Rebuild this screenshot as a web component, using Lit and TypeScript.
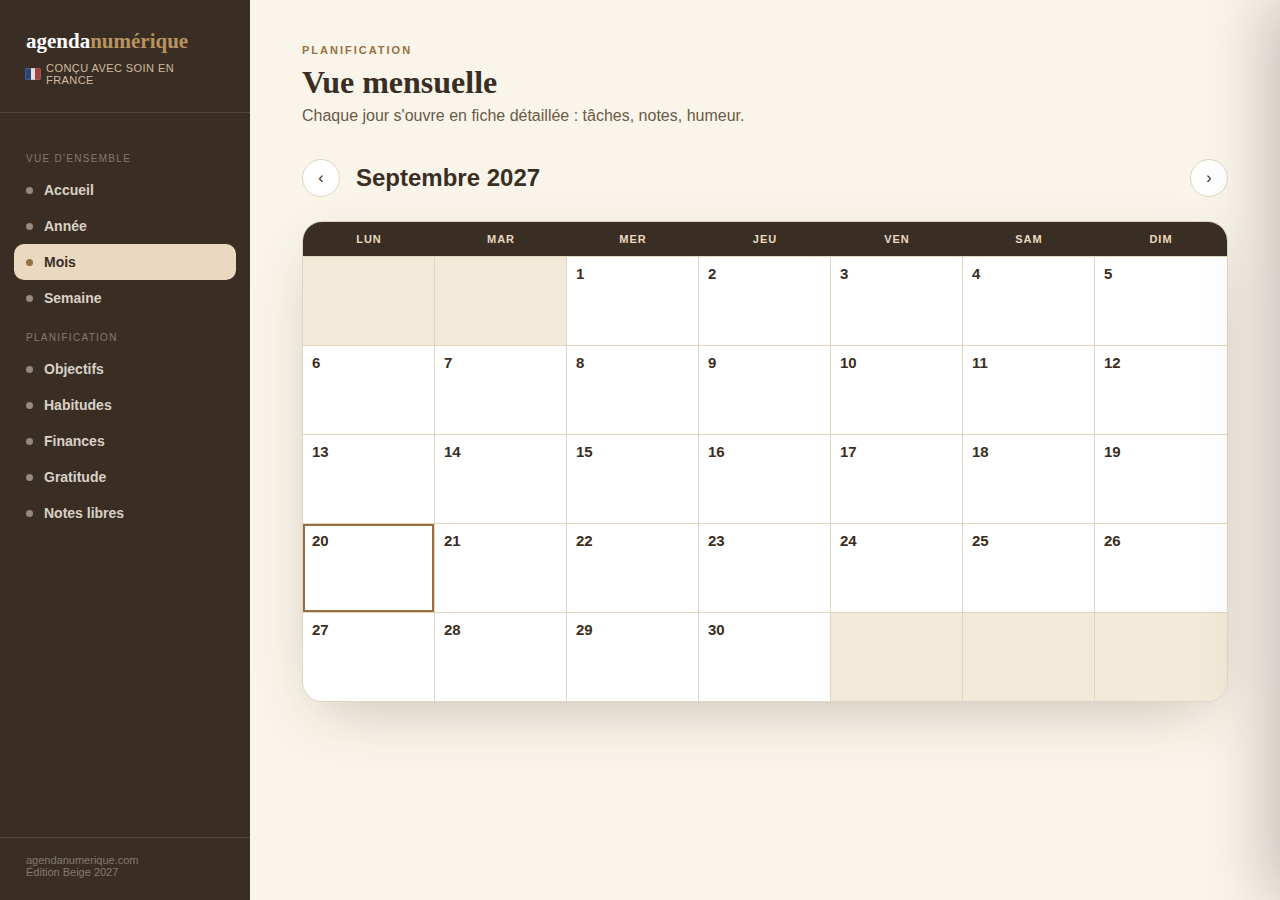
import { LitElement, html, css, svg } from "lit";
import { customElement, property } from "lit/decorators.js";
import { classMap } from "lit/directives/class-map.js";

interface NavSection {
  title: string;
  items: string[];
}

const SECTIONS: NavSection[] = [
  { title: "Vue d'ensemble", items: ["Accueil", "Année", "Mois", "Semaine"] },
  { title: "Planification", items: ["Objectifs", "Habitudes", "Finances", "Gratitude", "Notes libres"] },
];

const WEEKDAYS = ["Lun", "Mar", "Mer", "Jeu", "Ven", "Sam", "Dim"];

const FLAG = svg`
  <svg class="flag" viewBox="0 0 16 12" width="16" height="12" role="img" aria-label="Drapeau français">
    <defs><clipPath id="r"><rect x="0" y="0" width="16" height="12" rx="1.5"/></clipPath></defs>
    <g clip-path="url(#r)">
      <rect width="6" height="12" fill="#26457a"/>
      <rect x="6" width="4" height="12" fill="#e6e0de"/>
      <rect x="10" width="6" height="12" fill="#a2423f"/>
    </g>
    <rect x=".5" y=".5" width="15" height="11" rx="1.5" fill="none" stroke="#8b8794" stroke-opacity=".35"/>
  </svg>`;

@customElement("agenda-sidebar")
export class AgendaSidebar extends LitElement {
  @property() active = "Mois";

  static styles = css`
    :host {
      display: flex;
      flex-direction: column;
      box-sizing: border-box;
      background: #3a2e24;
      color: #fff;
    }
    .brand {
      padding: 28px 26px 26px;
      border-bottom: 1px solid #53473b;
    }
    .logo {
      font: bold 21px/27px "Liberation Serif", serif;
    }
    .logo span {
      color: #b8935f;
    }
    .made {
      display: flex;
      align-items: center;
      gap: 5px;
      margin: 7px 0 0 -1px;
      font-size: 11px;
      line-height: 12px;
      letter-spacing: 0.04em;
      text-transform: uppercase;
      color: #d0bba1;
    }
    .flag {
      flex: none;
    }
    nav {
      flex: 1;
      padding: 22px 14px;
    }
    h2 {
      margin: 0;
      padding: 18px 12px 7px;
      font-size: 10px;
      line-height: 12px;
      font-weight: 400;
      letter-spacing: 0.13em;
      text-transform: uppercase;
      color: #857a6e;
    }
    ul {
      margin: 0 0 -2px;
      padding: 0;
      list-style: none;
    }
    a {
      display: flex;
      align-items: center;
      gap: 11px;
      padding: 10px 12px;
      border-radius: 10px;
      font-size: 14px;
      line-height: 16px;
      font-weight: 700;
      color: #d8d1c8;
      text-decoration: none;
    }
    a::before {
      content: "";
      width: 7px;
      height: 7px;
      border-radius: 50%;
      background: #958a7e;
    }
    a.active {
      background: #ead9c0;
      color: #3a2e24;
    }
    a.active::before {
      background: #96703f;
    }
    footer {
      padding: 16px 26px 22px;
      border-top: 1px solid #53473b;
      font-size: 11px;
      line-height: 12px;
      color: #857a6e;
    }
  `;

  render() {
    return html`
      <div class="brand">
        <div class="logo">agenda<span>numérique</span></div>
        <div class="made">${FLAG}<span>Conçu avec soin en France</span></div>
      </div>
      <nav>
        ${SECTIONS.map(
          (s) => html`
            <h2>${s.title}</h2>
            <ul>
              ${s.items.map(
                (i) => html`<li><a href="#" class=${classMap({ active: i === this.active })}>${i}</a></li>`
              )}
            </ul>
          `
        )}
      </nav>
      <footer>agendanumerique.com<br />Édition Beige 2027</footer>
    `;
  }
}

@customElement("month-calendar")
export class MonthCalendar extends LitElement {
  @property({ type: Number }) offset = 2;
  @property({ type: Number }) days = 30;
  @property({ type: Number }) today = 20;

  static styles = css`
    :host {
      display: block;
      overflow: hidden;
      background: #fff;
      border: 1px solid #e2d5c0;
      border-radius: 20px;
      box-shadow: 0 20px 60px -20px rgba(58, 36, 30, 0.3);
    }
    table {
      width: 100%;
      table-layout: fixed;
      border-collapse: separate;
      border-spacing: 0;
    }
    th {
      padding: 11px 0;
      background: #3a2e24;
      color: #ead9c0;
      font-size: 11px;
      line-height: 12px;
      letter-spacing: 1px;
      text-transform: uppercase;
    }
    td {
      height: 88px;
      padding: 0;
      border-top: 1px solid #e2d5c0;
      border-right: 1px solid #e2d5c0;
    }
    td:last-child {
      border-right: 0;
    }
    td.empty {
      background: #f2e9d9;
    }
    button {
      display: flex;
      box-sizing: border-box;
      width: 100%;
      height: 88px;
      padding: 8px 9px;
      border: 0;
      background: none;
      color: #3a2e24;
      font: bold 15px/18px "Liberation Sans", Arial, sans-serif;
      text-align: left;
      cursor: pointer;
    }
    button.today {
      outline: 2px solid #96703f;
      outline-offset: -2px;
    }
  `;

  render() {
    const weeks = Math.ceil((this.offset + this.days) / 7);
    const dayAt = (w: number, d: number) => w * 7 + d - this.offset + 1;
    return html`
      <table aria-label="Septembre 2027">
        <thead>
          <tr>${WEEKDAYS.map((d) => html`<th scope="col">${d}</th>`)}</tr>
        </thead>
        <tbody>
          ${Array.from({ length: weeks }, (_, w) => html`
            <tr>
              ${WEEKDAYS.map((_, d) => {
                const n = dayAt(w, d);
                return n < 1 || n > this.days
                  ? html`<td class="empty"></td>`
                  : html`<td><button type="button" class=${classMap({ today: n === this.today })}>${n}</button></td>`;
              })}
            </tr>
          `)}
        </tbody>
      </table>
    `;
  }
}

@customElement("app-root")
export class AppRoot extends LitElement {
  static styles = css`
    :host {
      display: grid;
      grid-template-columns: 250px minmax(0, 1fr);
      min-height: 100vh;
      background: #faf5ea;
      color: #3a2e24;
      font-family: "Liberation Sans", Arial, sans-serif;
    }
    main {
      padding: 43px 52px;
    }
    .eyebrow {
      margin: 0;
      font-size: 11px;
      line-height: 14px;
      font-weight: 700;
      letter-spacing: 2px;
      text-transform: uppercase;
      color: #96703f;
    }
    h1 {
      margin: 6px 0 5px;
      font: bold 32px/38px "Liberation Serif", serif;
    }
    .lead {
      margin: 0;
      font-size: 16px;
      line-height: 20px;
      color: #6b5a48;
    }
    .bar {
      display: flex;
      align-items: center;
      gap: 16px;
      margin: 33px 0 24px;
    }
    .bar h2 {
      flex: 1;
      margin: 0;
      font-size: 24px;
      line-height: 28px;
    }
    .bar button {
      width: 38px;
      height: 38px;
      padding: 0;
      border: 1px solid #e2d5c0;
      border-radius: 50%;
      background: #fff;
      color: #3a2e24;
      font: 16px/18px "Liberation Sans", Arial, sans-serif;
      cursor: pointer;
    }
    .drawer {
      position: fixed;
      top: 0;
      bottom: 0;
      left: 100%;
      width: 460px;
      background: #faf5ea;
      box-shadow: -10px 0 60px rgba(20, 20, 30, 0.25);
      pointer-events: none;
    }
  `;

  render() {
    return html`
      <agenda-sidebar active="Mois"></agenda-sidebar>
      <main>
        <p class="eyebrow">Planification</p>
        <h1>Vue mensuelle</h1>
        <p class="lead">Chaque jour s'ouvre en fiche détaillée : tâches, notes, humeur.</p>
        <div class="bar">
          <button type="button" aria-label="Mois précédent">‹</button>
          <h2>Septembre 2027</h2>
          <button type="button" aria-label="Mois suivant">›</button>
        </div>
        <month-calendar></month-calendar>
      </main>
      <aside class="drawer" aria-hidden="true"></aside>
    `;
  }
}
